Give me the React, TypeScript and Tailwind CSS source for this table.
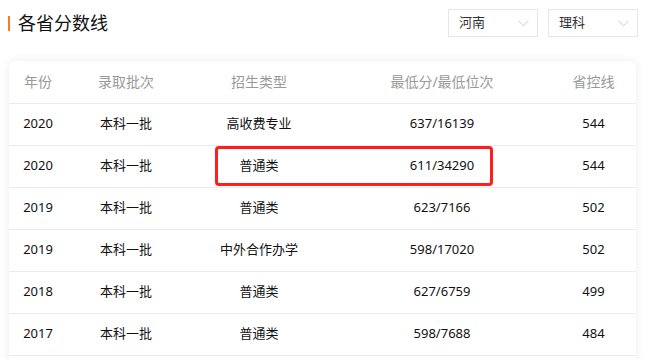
import React from "react";

const rows = [
  ["2020", "本科一批", "高收费专业", "637/16139", "544"],
  ["2020", "本科一批", "普通类", "611/34290", "544"],
  ["2019", "本科一批", "普通类", "623/7166", "502"],
  ["2019", "本科一批", "中外合作办学", "598/17020", "502"],
  ["2018", "本科一批", "普通类", "627/6759", "499"],
  ["2017", "本科一批", "普通类", "598/7688", "484"],
];

const cols = "grid grid-cols-[58px_118px_148px_218px_85px]";

function Chevron() {
  return (
    <svg width="11" height="7" viewBox="0 0 11 7" fill="none">
      <path d="M0.5 0.8 L5.5 5.8 L10.5 0.8" stroke="#c8c8c8" strokeWidth="1" />
    </svg>
  );
}

function Select({ label }: { label: string }) {
  return (
    <div className="flex h-[28px] w-[90px] items-center justify-between border border-[#e6e6e6] pl-[10px] pr-[8px] text-[13px] text-[#333]">
      <span>{label}</span>
      <Chevron />
    </div>
  );
}

export default function App() {
  return (
    <div
      className="relative h-[359px] w-[649px] overflow-hidden bg-white"
      style={{ fontFamily: '"Noto Sans", "Noto Sans CJK SC", sans-serif' }}
    >
      <div className="flex items-center justify-between pl-[8px] pr-[11px] pt-[9px]">
        <div className="flex items-center">
          <div className="h-[15px] w-[2px] bg-[#ff7a1a]" />
          <span className="ml-[8px] text-[18px] leading-[28px] text-[#111]">各省分数线</span>
        </div>
        <div className="flex gap-[10px]">
          <Select label="河南" />
          <Select label="理科" />
        </div>
      </div>

      <div className="ml-[9px] mt-[24px] w-[627px] rounded-[6px] bg-white shadow-[0_0_10px_rgba(0,0,0,0.08)]">
        <div className={`${cols} h-[42px] items-center pb-[2px] text-center text-[14px] text-[#999]`}>
          <div>年份</div>
          <div>录取批次</div>
          <div>招生类型</div>
          <div>最低分/最低位次</div>
          <div>省控线</div>
        </div>
        {rows.map((r, i) => (
          <div
            key={i}
            className={`${cols} h-[42px] items-center border-t border-[#ebebeb] pb-[2px] text-center text-[13px] text-[#111]`}
          >
            {r.map((c, j) => (
              <div key={j}>{c}</div>
            ))}
          </div>
        ))}
        <div className="h-[40px] border-t border-[#ebebeb]" />
      </div>

      <div className="absolute left-[215px] top-[146px] h-[40px] w-[278px] rounded-[4px] border-[3px] border-[#ff1e1e]" />
    </div>
  );
}
